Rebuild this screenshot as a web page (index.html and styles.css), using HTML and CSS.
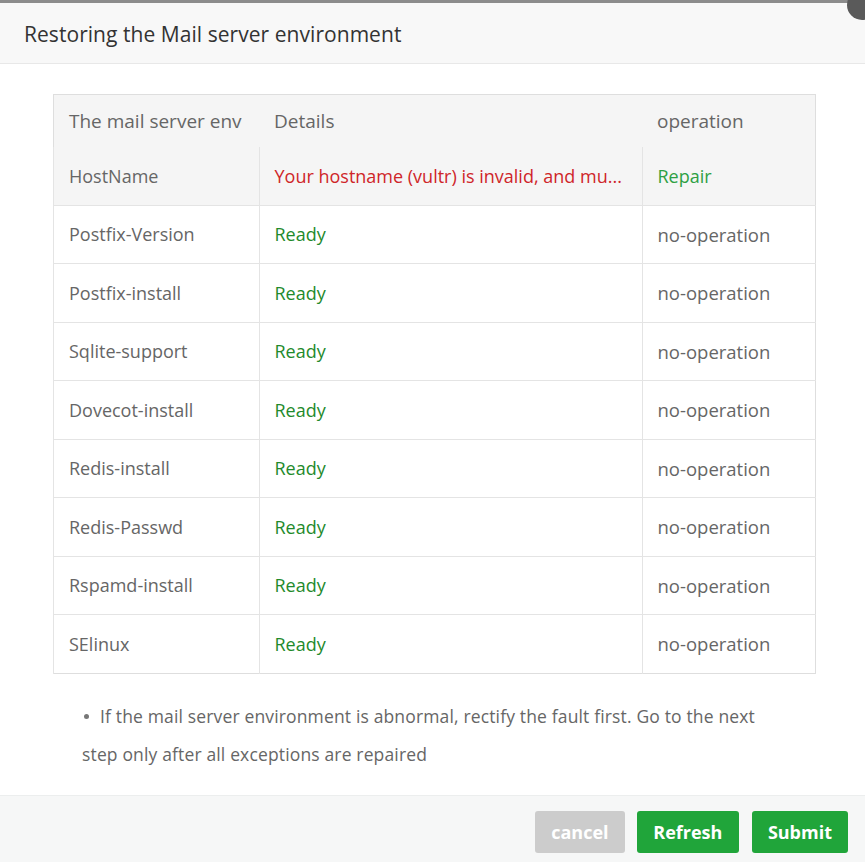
FILE: index.html
```html
<!DOCTYPE html>
<html>
<head>
<meta charset="utf-8">
<link rel="stylesheet" href="styles.css">
</head>
<body>
<div class="dialog">
  <div class="topline"></div>
  <div class="close"></div>
  <div class="head">Restoring the Mail server environment</div>
  <div class="content">
    <table class="env">
      <thead>
        <tr><th class="c1">The mail server env</th><th class="c2">Details</th><th class="c3">operation</th></tr>
      </thead>
      <tbody>
        <tr class="hl"><td>HostName</td><td class="err">Your hostname (vultr) is invalid, and mu...</td><td class="repair">Repair</td></tr>
        <tr><td>Postfix-Version</td><td class="ok">Ready</td><td>no-operation</td></tr>
        <tr><td>Postfix-install</td><td class="ok">Ready</td><td>no-operation</td></tr>
        <tr><td>Sqlite-support</td><td class="ok">Ready</td><td>no-operation</td></tr>
        <tr><td>Dovecot-install</td><td class="ok">Ready</td><td>no-operation</td></tr>
        <tr><td>Redis-install</td><td class="ok">Ready</td><td>no-operation</td></tr>
        <tr><td>Redis-Passwd</td><td class="ok">Ready</td><td>no-operation</td></tr>
        <tr><td>Rspamd-install</td><td class="ok">Ready</td><td>no-operation</td></tr>
        <tr><td>SElinux</td><td class="ok">Ready</td><td>no-operation</td></tr>
      </tbody>
    </table>
    <p class="note"><span class="dot"></span>If the mail server environment is abnormal, rectify the fault first. Go to the next step only after all exceptions are repaired</p>
  </div>
  <div class="foot">
    <button class="btn cancel">cancel</button>
    <button class="btn green refresh">Refresh</button>
    <button class="btn green">Submit</button>
  </div>
</div>
</body>
</html>
```
FILE: styles.css
```css
html, body {
  margin: 0;
  padding: 0;
  background: #fff;
}
body {
  font-family: "Open Sans", "Noto Sans", "Liberation Sans", sans-serif;
  color: #666;
}
.dialog {
  position: relative;
  width: 865px;
  height: 862px;
  overflow: hidden;
  display: flex;
  flex-direction: column;
}
.topline {
  height: 3px;
  background: #8c8c8c;
}
.close {
  position: absolute;
  right: -12px;
  top: -10px;
  width: 30px;
  height: 30px;
  border-radius: 50%;
  background: #5a5a5a;
}
.head {
  height: 60px;
  line-height: 63px;
  padding-left: 24px;
  background: #f8f8f8;
  border-bottom: 1px solid #e8e8e8;
  font-size: 21px;
  color: #333;
  letter-spacing: 0.05px;
}
.content {
  flex: 1;
  padding: 30px 49px 0 53px;
}
.env {
  width: 763px;
  border-collapse: collapse;
  border: 1px solid #dedede;
  font-size: 18px;
  table-layout: fixed;
}
.env th {
  text-align: left;
  font-weight: normal;
  height: 52px;
  padding: 0 15px;
  background: #f5f5f5;
  color: #666;
  font-size: 19px;
}
.env th.c1 { width: 175px; }
.env th.c2 { width: 353px; }
.env td {
  height: 57.5px;
  padding: 0 15px;
  border-top: 1px solid #e4e4e4;
  border-left: 1px solid #e4e4e4;
  white-space: nowrap;
  overflow: hidden;
  color: #666;
}
.env td:last-child { padding-left: 15px; font-size: 18.5px; }
.env tr.hl td {
  background: #f5f5f5;
  border-top: none;
}
.env td.err { color: #cf2529; }
.env td.repair { color: #2ea043; font-size: 18px; }
.env td.ok { color: #1f8a2c; }
.note {
  margin: 23px 0 0 29px;
  padding-right: 50px;
  font-size: 17.5px;
  line-height: 38px;
  color: #666;
  letter-spacing: 0.15px;
}
.dot {
  display: inline-block;
  width: 5px;
  height: 5px;
  border-radius: 50%;
  background: #777;
  margin: 0 11px 3px 2px;
  vertical-align: middle;
}
.foot {
  height: 67px;
  background: #f6f7f7;
  border-top: 1px solid #eceeee;
  display: flex;
  justify-content: flex-end;
  align-items: flex-start;
  gap: 12px;
  padding: 15px 17px 0 0;
  box-sizing: border-box;
}
.btn {
  height: 42px;
  border: none;
  border-radius: 3px;
  color: #fff;
  font-family: "Open Sans", "Noto Sans", sans-serif;
  font-weight: bold;
  font-size: 18px;
  padding: 0 16px;
}
.btn.cancel {
  background: #cccccc;
  width: 90px;
}
.btn.refresh {
  width: 102px;
  margin-right: 1px;
}
.btn.green {
  background: #20a53a;
}
```
